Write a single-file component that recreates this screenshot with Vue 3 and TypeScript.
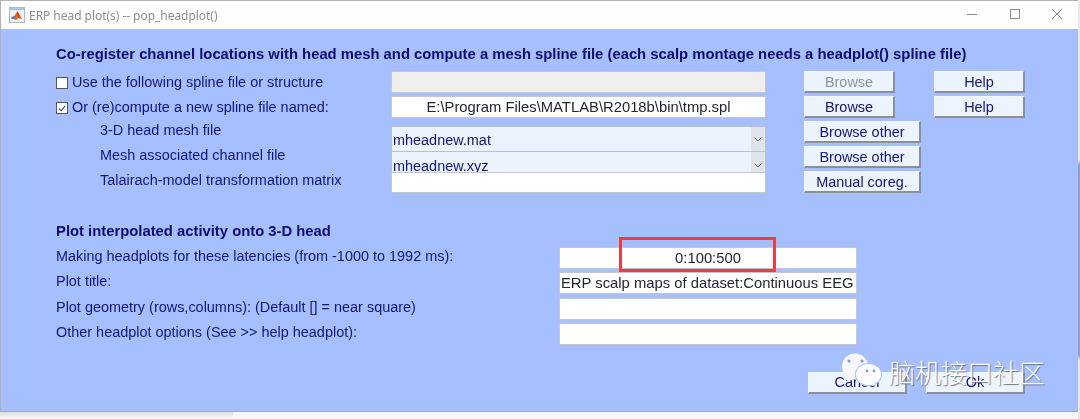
<script setup lang="ts">
const labelsTop = [
  '3-D head mesh file',
  'Mesh associated channel file',
  'Talairach-model transformation matrix',
]
const plotRows: { label: string; value: string; center?: boolean }[] = [
  { label: 'Making headplots for these latencies (from -1000 to 1992 ms):', value: '0:100:500', center: true },
  { label: 'Plot title:', value: 'ERP scalp maps of dataset:Continuous EEG' },
  { label: 'Plot geometry (rows,columns): (Default [] = near square)', value: '' },
  { label: 'Other headplot options (See >> help headplot):', value: '' },
]
</script>

<template>
  <div class="page">
    <div class="window">
      <header class="titlebar">
        <svg class="appicon" width="16" height="16" viewBox="0 0 18 18">
          <rect x="0.5" y="0.5" width="17" height="17" fill="#eef1f5" stroke="#a9b0b8" />
          <rect x="1" y="1" width="16" height="2.5" fill="#a9c4dc" />
          <path d="M2 12.5 L6 10 L9 5 L11 7 L15 14 L11 12 L8 15 Z" fill="#e8701a" />
          <path d="M2 12.5 L6 10 L8 11 L5 13.5 Z" fill="#3a7cc0" />
          <path d="M9 5 L11 7 L12 14 L9.5 10 Z" fill="#c8401a" />
        </svg>
        <span class="title">ERP head plot(s) -- pop_headplot()</span>
        <div class="winbtns">
          <svg width="12" height="12" viewBox="0 0 12 12"><path d="M1 6.5H11" stroke="#8a8a8a" /></svg>
          <svg width="12" height="12" viewBox="0 0 12 12"><rect x="1.5" y="1.5" width="9" height="9" fill="none" stroke="#8a8a8a" /></svg>
          <svg width="12" height="12" viewBox="0 0 12 12"><path d="M1 1L11 11M11 1L1 11" stroke="#8a8a8a" /></svg>
        </div>
      </header>

      <main class="body">
        <h2 class="head">Co-register channel locations with head mesh and compute a mesh spline file (each scalp montage needs a headplot() spline file)</h2>

        <section class="spline">
          <div class="col-labels">
            <label class="line check"><span class="box"></span>Use the following spline file or structure</label>
            <label class="line check">
              <span class="box">
                <svg width="11" height="11" viewBox="0 0 11 11"><path d="M2 5.5L4.5 8L9 2.5" fill="none" stroke="#444" stroke-width="1.2" /></svg>
              </span>Or (re)compute a new spline file named:
            </label>
            <div class="sub">
              <div v-for="l in labelsTop" :key="l" class="line">{{ l }}</div>
            </div>
          </div>

          <div class="col-fields">
            <div class="field disabled"></div>
            <div class="field center">E:\Program Files\MATLAB\R2018b\bin\tmp.spl</div>
            <div class="combos">
              <div class="combo first"><span class="combo-text">mheadnew.mat</span><span class="arrow"><svg width="8" height="5" viewBox="0 0 8 5"><path d="M0.5 0.5L4 4L7.5 0.5" fill="none" stroke="#666" /></svg></span></div>
              <div class="combo second"><span class="combo-text">mheadnew.xyz</span><span class="arrow"><svg width="8" height="5" viewBox="0 0 8 5"><path d="M0.5 0.5L4 4L7.5 0.5" fill="none" stroke="#666" /></svg></span></div>
            </div>
            <div class="field last"></div>
          </div>

          <div class="col-buttons">
            <div class="btn-row">
              <button class="btn short off">Browse</button>
              <button class="btn short">Help</button>
            </div>
            <div class="btn-row">
              <button class="btn short">Browse</button>
              <button class="btn short">Help</button>
            </div>
            <button class="btn wide">Browse other</button>
            <button class="btn wide">Browse other</button>
            <button class="btn wide">Manual coreg.</button>
          </div>
        </section>

        <h2 class="head second-head">Plot interpolated activity onto 3-D head</h2>

        <section class="plot">
          <div v-for="r in plotRows" :key="r.label" class="plot-row">
            <div class="plot-label">{{ r.label }}</div>
            <div class="field plot-field" :class="{ center: r.center }">{{ r.value }}</div>
          </div>
        </section>

        <footer class="actions">
          <button class="btn action">Cancel</button>
          <button class="btn action">Ok</button>
        </footer>
      </main>
    </div>

    <div class="edge-strip"></div>
    <div class="shadow-left"></div>
    <div class="redbox"></div>

    <div class="watermark">
      <svg class="wechat" width="42" height="38" viewBox="0 0 42 38">
        <ellipse cx="14" cy="13.5" rx="13" ry="13" fill="#f6f8fe" />
        <path d="M6 23L6 29L13 26Z" fill="#f6f8fe" />
        <ellipse cx="27.5" cy="21.5" rx="13.5" ry="11.5" fill="#a6bfff" />
        <ellipse cx="27.5" cy="21.5" rx="12.5" ry="10.5" fill="#fbfcff" />
        <path d="M33 29L35 33L29 31Z" fill="#fbfcff" />
        <circle cx="8" cy="8" r="1.6" fill="#8a9bc4" />
        <circle cx="21" cy="8" r="1.6" fill="#8a9bc4" />
        <circle cx="26" cy="18" r="1.4" fill="#8a9bc4" />
        <circle cx="33" cy="18" r="1.4" fill="#8a9bc4" />
      </svg>
      <span class="wm-text">脑机接口社区</span>
    </div>
  </div>
</template>

<style>
html, body { margin: 0; background: #f7f7f7; }
</style>

<style scoped>
.page {
  position: relative;
  width: 1080px;
  height: 419px;
  overflow: hidden;
  font-family: "Liberation Sans", Arial, sans-serif;
  font-size: 14.45px;
  color: #14147a;
  background: #f6f7f7;
}
.window {
  width: 1078px;
  height: 412px;
  border-top: 1px solid #b4b4b4;
  border-left: 1px solid #b4b4b4;
  border-bottom: 1px solid #a4a8b0;
  box-sizing: border-box;
  display: flex;
  flex-direction: column;
  filter: blur(0.35px);
}
.titlebar {
  height: 28px;
  flex: none;
  background: #fff;
  display: flex;
  align-items: center;
  padding-left: 8px;
}
.appicon { flex: none; margin-right: 4px; }
.title {
  font-family: "Noto Sans", sans-serif;
  font-size: 12px;
  letter-spacing: -0.04px;
  color: #8d8d8d;
}
.winbtns {
  margin-left: auto;
  margin-right: 15px;
  display: flex;
  gap: 30.5px;
  margin-top: -2px;
}
.body {
  flex: 1;
  background: #a6bfff;
  padding: 17px 0 0 55px;
  display: flex;
  flex-direction: column;
  min-height: 0;
}
.head {
  margin: 0;
  font-size: 14.82px;
  line-height: 16px;
  font-weight: 700;
  color: #0d0d6e;
  white-space: nowrap;
}
.spline {
  margin-top: 9px;
  display: flex;
  align-items: flex-start;
}
.col-labels { width: 335px; flex: none; }
.line { display: flex; align-items: center; height: 25px; white-space: nowrap; }
.col-labels .line { line-height: 25px; }
.check { gap: 4px; margin-top: -1px; margin-bottom: 1px; }
.box {
  width: 10px;
  height: 10px;
  border: 1px solid #555;
  background: #fff;
  display: flex;
}
.sub { padding-left: 44px; margin-top: -3px; }
.col-fields { width: 375px; flex: none; display: flex; flex-direction: column; }
.field {
  height: 22px;
  box-sizing: border-box;
  border: 1px solid #c2c6cf;
  background: #fff;
  color: #242438;
  font-size: 14.8px;
  line-height: 20px;
  white-space: nowrap;
  overflow: hidden;
  padding: 0 1px;
}
.field + .field { margin-top: 3px; }
.center { text-align: center; }
.disabled { background: #efefef; }
.combos { margin-top: 8px; display: flex; flex-direction: column; }
.combo {
  display: flex;
  background: #ebf3ff;
  border: 1px solid #bcc0c8;
  border-bottom: 0;
  box-sizing: border-box;
  overflow: hidden;
}
.combo.first { height: 25px; }
.combo.second { height: 21px; }
.combo-text { flex: 1; padding-left: 1px; line-height: 26px; height: 26px; color: #14147a; }
.second .combo-text { line-height: 29px; height: 29px; }
.arrow {
  width: 14px;
  background: #dfe3ea;
  display: flex;
  align-items: center;
  justify-content: center;
}
.second .arrow { padding-top: 7px; box-sizing: border-box; }
.last { height: 21px; }
.col-buttons {
  margin-left: 38px;
  display: flex;
  flex-direction: column;
  gap: 3px;
}
.btn-row { display: flex; gap: 39px; }
.btn {
  font: inherit;
  color: #14147a;
  background: #ecf4ff;
  height: 22px;
  padding: 0;
  box-sizing: border-box;
  border-style: solid;
  border-width: 1px 2px 2px 1px;
  border-color: #f4f7fd #8d8f96 #8d8f96 #f4f7fd;
  white-space: nowrap;
}
.short { width: 91px; }
.wide { width: 117px; }
.off { color: #8f939e; }
.second-head { margin-top: 30px; }
.plot { margin-top: 8px; display: flex; flex-direction: column; gap: 3.3px; }
.plot-row { display: flex; align-items: center; }
.plot-label { width: 503px; flex: none; white-space: nowrap; margin-top: -4px; }
.plot-field { width: 298px; }
.actions {
  margin-top: 27px;
  margin-left: 752px;
  display: flex;
  gap: 19px;
}
.action { width: 99px; }

.edge-strip {
  position: absolute;
  left: 1078px;
  top: 0;
  width: 2px;
  height: 419px;
  background: linear-gradient(#e9eaee 0, #e9eaee 160px, #8c9fd0 165px, #8c9fd0 355px, #e6e7ea 360px);
}
.shadow-left {
  position: absolute;
  left: 0;
  top: 412px;
  width: 233px;
  height: 5px;
  background: linear-gradient(#dedfe2, #f0f0f1);
}
.redbox {
  position: absolute;
  left: 619px;
  top: 237px;
  width: 157px;
  height: 35px;
  box-sizing: border-box;
  border: 3px solid #ef3c42;
}
.watermark {
  position: absolute;
  left: 841px;
  top: 353px;
  display: flex;
  align-items: center;
  gap: 6px;
}
.wechat { flex: none; }
.wm-text {
  font-family: "Noto Sans CJK SC", sans-serif;
  font-size: 26px;
  line-height: 38px;
  font-weight: 300;
  color: #fff;
  text-shadow: 1px 1px 1px #6d7280;
  white-space: nowrap;
}
</style>
